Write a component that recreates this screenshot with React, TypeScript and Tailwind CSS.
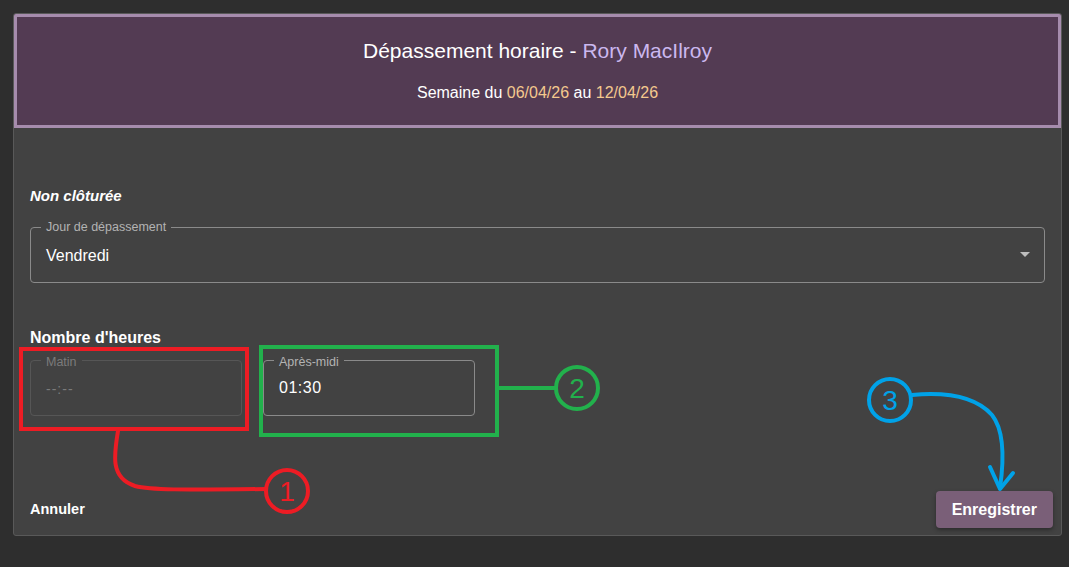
const FONT = "font-['Liberation_Sans',Arial,sans-serif]"

function Annotations() {
  return (
    <svg
      className="absolute inset-0 pointer-events-none"
      width="1069"
      height="567"
      viewBox="0 0 1069 567"
      fill="none"
    >
      {/* 1 — Matin */}
      <rect x="21" y="349" width="226" height="80" stroke="#ed1c24" strokeWidth="4" />
      <path d="M118 431 C 114 455, 110 478, 135 486 C 150 490, 180 490, 266 489" stroke="#ed1c24" strokeWidth="4" strokeLinecap="round" />
      <circle cx="287" cy="491" r="21" stroke="#ed1c24" strokeWidth="4" />
      <text x="287" y="501" textAnchor="middle" fill="#ed1c24" fontSize="28" fontFamily="Liberation Sans, sans-serif" fontWeight="300">1</text>

      {/* 2 — Après-midi */}
      <rect x="261" y="347" width="236" height="88" stroke="#22b14c" strokeWidth="4" />
      <line x1="498" y1="388" x2="556" y2="388" stroke="#22b14c" strokeWidth="4" />
      <circle cx="577" cy="388" r="21" stroke="#22b14c" strokeWidth="4" />
      <text x="577" y="398" textAnchor="middle" fill="#22b14c" fontSize="28" fontFamily="Liberation Sans, sans-serif">2</text>

      {/* 3 — Enregistrer */}
      <circle cx="890" cy="400" r="21" stroke="#00a2e8" strokeWidth="4" />
      <text x="890" y="410" textAnchor="middle" fill="#00a2e8" fontSize="28" fontFamily="Liberation Sans, sans-serif">3</text>
      <path d="M912 395 C 945 392, 975 396, 992 415 C 1004 430, 1004 460, 1000 488" stroke="#00a2e8" strokeWidth="4" strokeLinecap="round" />
      <path d="M990 467 L 1000 489 L 1013 473" stroke="#00a2e8" strokeWidth="4" strokeLinecap="round" strokeLinejoin="round" />
    </svg>
  )
}

export default function App() {
  return (
    <div className={`relative w-[1069px] h-[567px] bg-[#2e2e2e] pt-[13px] pl-[13px] ${FONT}`}>
      <div className="w-[1049px] h-[523px] bg-[#424242] border border-[#595959] rounded-[3px] flex flex-col overflow-hidden">
        {/* Header */}
        <div className="h-[114px] border-[3px] border-[#a68cad] bg-[#533b53] flex flex-col items-center pt-[19px]">
          <div className="text-[21px] font-medium text-white leading-[30px]">
            Dépassement horaire - <span className="text-[#cbb8ef]">Rory MacIlroy</span>
          </div>
          <div className="mt-[16px] text-[16px] text-white leading-[22px]">
            Semaine du <span className="text-[#f3c98e]">06/04/26</span> au <span className="text-[#f3c98e]">12/04/26</span>
          </div>
        </div>

        {/* Body */}
        <div className="flex-1 flex flex-col px-[16px] pt-[57px]">
          <div className="text-[15px] font-bold italic text-white leading-[22px]">Non clôturée</div>

          {/* Select */}
          <div className="relative mt-[20px] h-[56px] border border-[#8a8a8a] rounded-[4px] flex items-center pl-[15px] pr-[14px]">
            <span className="absolute -top-[9px] left-[10px] bg-[#424242] px-[5px] text-[12.5px] text-[#b3b3b3] leading-[16px]">
              Jour de dépassement
            </span>
            <span className="flex-1 text-[16px] text-white pt-[1px]">Vendredi</span>
            <svg width="10" height="6" viewBox="0 0 10 6"><path d="M0 0 H10 L5 5 Z" fill="#bdbdbd" /></svg>
          </div>

          <div className="mt-[44px] text-[16px] font-bold text-white leading-[22px]">Nombre d'heures</div>

          {/* Time fields */}
          <div className="mt-[11px] flex gap-[21px]">
            <div className="relative w-[212px] h-[56px] border border-[#565656] rounded-[4px] flex items-center pl-[15px]">
              <span className="absolute -top-[7px] left-[10px] bg-[#424242] px-[5px] text-[12.5px] text-[#7b7b7b] leading-[16px]">Matin</span>
              <span className="text-[14px] text-[#7b7b7b] tracking-[1px] pt-[3px]">--:--</span>
            </div>
            <div className="relative w-[212px] h-[56px] border border-[#8a8a8a] rounded-[4px] flex items-center pl-[15px]">
              <span className="absolute -top-[7px] left-[10px] bg-[#424242] px-[5px] text-[12.5px] text-[#b3b3b3] leading-[16px]">Après-midi</span>
              <span className="text-[16px] text-white tracking-[0.5px]">01:30</span>
            </div>
          </div>

          {/* Footer */}
          <div className="mt-auto mb-[7px] -mr-[8px] flex items-center justify-between">
            <button className="text-[14.5px] font-bold text-white">Annuler</button>
            <button className="h-[37px] px-[16px] rounded-[4px] bg-[#7a5f78] text-[16px] font-bold text-white shadow-[0_2px_4px_rgba(0,0,0,0.35)]">
              Enregistrer
            </button>
          </div>
        </div>
      </div>
      <Annotations />
    </div>
  )
}
